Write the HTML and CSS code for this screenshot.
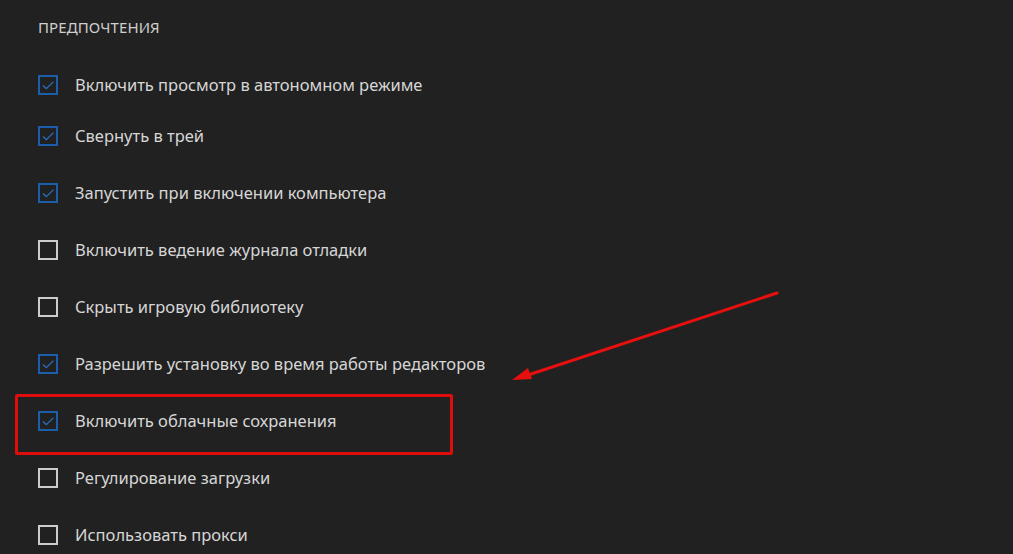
FILE: index.html
```html
<!DOCTYPE html>
<html lang="ru">
<head>
<meta charset="utf-8">
<link rel="stylesheet" href="styles.css">
</head>
<body>
<div class="page">
  <h2 class="title">ПРЕДПОЧТЕНИЯ</h2>
  <ul class="list">
    <li class="row first"><span class="box on"><svg viewBox="2 2 16 16"><path d="M5 10.5 L8.3 13.6 L15.5 6.6" /></svg></span><span class="label">Включить просмотр в автономном режиме</span></li>
    <li class="row"><span class="box on"><svg viewBox="2 2 16 16"><path d="M5 10.5 L8.3 13.6 L15.5 6.6" /></svg></span><span class="label">Свернуть в трей</span></li>
    <li class="row"><span class="box on"><svg viewBox="2 2 16 16"><path d="M5 10.5 L8.3 13.6 L15.5 6.6" /></svg></span><span class="label">Запустить при включении компьютера</span></li>
    <li class="row"><span class="box"></span><span class="label">Включить ведение журнала отладки</span></li>
    <li class="row"><span class="box"></span><span class="label">Скрыть игровую библиотеку</span></li>
    <li class="row"><span class="box on"><svg viewBox="2 2 16 16"><path d="M5 10.5 L8.3 13.6 L15.5 6.6" /></svg></span><span class="label">Разрешить установку во время работы редакторов</span></li>
    <li class="row marked"><span class="box on"><svg viewBox="2 2 16 16"><path d="M5 10.5 L8.3 13.6 L15.5 6.6" /></svg></span><span class="label">Включить облачные сохранения</span></li>
    <li class="row"><span class="box"></span><span class="label">Регулирование загрузки</span></li>
    <li class="row"><span class="box"></span><span class="label">Использовать прокси</span></li>
  </ul>
  <svg class="arrow" viewBox="0 0 1013 554" preserveAspectRatio="none">
    <line x1="777" y1="293" x2="525" y2="376" />
    <path d="M512 380 L528 368 L532 379 Z" />
  </svg>
</div>
</body>
</html>
```
FILE: styles.css
```css
html, body {
  margin: 0;
  padding: 0;
  background: #212121;
}
body {
  width: 1013px;
  height: 554px;
  overflow: hidden;
  font-family: "Noto Sans", "Open Sans", sans-serif;
  color: #d6d6d6;
}
.page {
  position: relative;
  width: 1013px;
  height: 554px;
  padding: 16px 0 0 38px;
  box-sizing: border-box;
}
.title {
  margin: 0;
  font-size: 15px;
  font-weight: 400;
  line-height: 22px;
  color: #cfcfcf;
  letter-spacing: 0.1px;
}
.list {
  list-style: none;
  margin: 24px 0 0;
  padding: 0;
}
.row {
  display: flex;
  align-items: center;
  height: 57px;
  position: relative;
}
.row.first {
  height: 45px;
}
.box {
  width: 20px;
  height: 20px;
  box-sizing: border-box;
  border: 2px solid #cccccc;
  flex: none;
  display: flex;
  align-items: center;
  justify-content: center;
}
.box.on {
  border-color: #1d5eab;
}
.box svg {
  width: 16px;
  height: 16px;
}
.box svg path {
  fill: none;
  stroke: #2e6ec4;
  stroke-width: 1.3;
}
.label {
  margin-left: 17px;
  font-size: 16.5px;
  line-height: 22px;
}
.marked::before {
  content: "";
  position: absolute;
  left: -23px;
  top: 2px;
  width: 438px;
  height: 61px;
  border: 3px solid #e00d0d;
  border-radius: 2px;
  box-sizing: border-box;
}
.arrow {
  position: absolute;
  left: 0;
  top: 0;
  width: 1013px;
  height: 554px;
  pointer-events: none;
}
.arrow line {
  stroke: #e80f0f;
  stroke-width: 3;
  stroke-linecap: round;
}
.arrow path {
  fill: #e80f0f;
}
```
